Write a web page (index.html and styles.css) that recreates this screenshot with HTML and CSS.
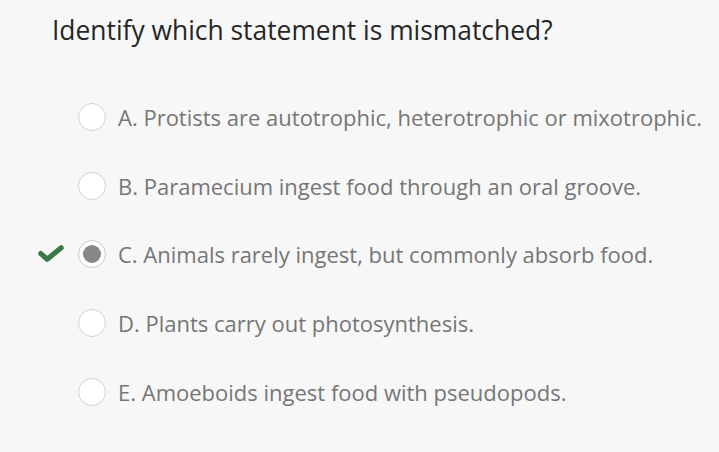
FILE: index.html
```html
<!DOCTYPE html>
<html>
<head>
<meta charset="utf-8">
<link rel="stylesheet" href="styles.css">
</head>
<body>
<div class="quiz">
  <h1 class="question">Identify which statement is mismatched?</h1>
  <ul class="options">
    <li class="option"><span class="mark"></span><span class="radio"></span><span class="label">A. Protists are autotrophic, heterotrophic or mixotrophic.</span></li>
    <li class="option"><span class="mark"></span><span class="radio"></span><span class="label">B. Paramecium ingest food through an oral groove.</span></li>
    <li class="option"><span class="mark"><svg class="check" viewBox="0 0 26 17" width="26" height="17"><path d="M2.8 8.6 L9.2 14.2 L23.2 2.8" fill="none" stroke="#3b7a47" stroke-width="5.2" stroke-linecap="round" stroke-linejoin="round"/></svg></span><span class="radio selected"></span><span class="label">C. Animals rarely ingest, but commonly absorb food.</span></li>
    <li class="option"><span class="mark"></span><span class="radio"></span><span class="label">D. Plants carry out photosynthesis.</span></li>
    <li class="option"><span class="mark"></span><span class="radio"></span><span class="label">E. Amoeboids ingest food with pseudopods.</span></li>
  </ul>
</div>
</body>
</html>
```

FILE: styles.css
```css
html, body {
  margin: 0;
  padding: 0;
  background: #f7f7f7;
}
body {
  font-family: "Open Sans", "Liberation Sans", sans-serif;
  width: 719px;
  height: 452px;
  overflow: hidden;
}
.quiz {
  padding: 12px 0 0 52px;
}
.question {
  margin: 0;
  font-size: 26.4px;
  font-weight: 400;
  line-height: 36px;
  color: #262626;
}
.options {
  list-style: none;
  margin: 0;
  padding: 55px 0 0 0;
  display: flex;
  flex-direction: column;
  gap: 40.7px;
}
.option {
  display: flex;
  align-items: center;
  height: 28px;
  margin-left: -14px;
}
.mark {
  width: 26px;
  height: 20px;
  margin-right: 14px;
  display: flex;
  align-items: center;
}
.check {
  display: block;
  margin-bottom: 1px;
}
.radio {
  box-sizing: border-box;
  width: 28px;
  height: 28px;
  border-radius: 50%;
  border: 1px solid #d2d2d2;
  background: #fff;
  margin-right: 12px;
  position: relative;
}
.radio.selected {
  border-color: #cccccc;
}
.radio.selected::after {
  content: "";
  position: absolute;
  left: 4px;
  top: 4px;
  width: 18px;
  height: 18px;
  border-radius: 50%;
  background: #878787;
}
.label {
  font-size: 22px;
  color: #767676;
  white-space: nowrap;
}
```
